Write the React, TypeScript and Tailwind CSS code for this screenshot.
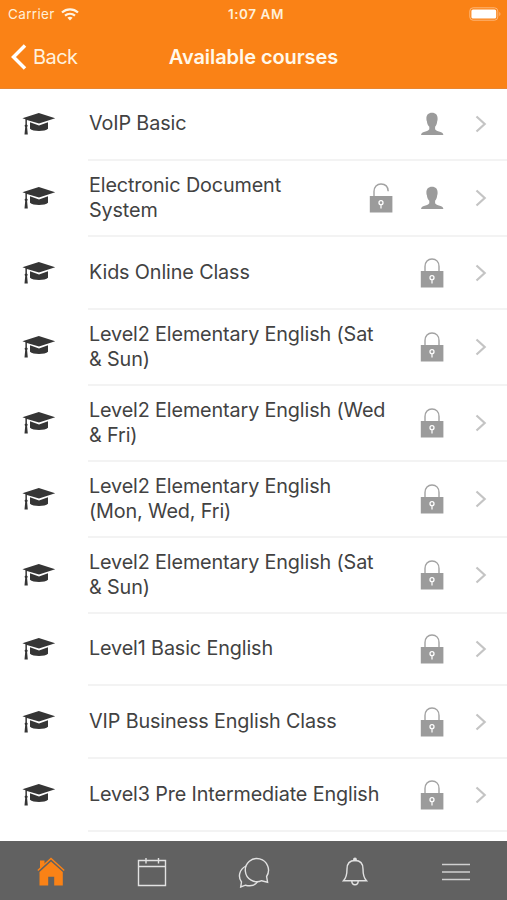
type Course = { lines: string[]; height: string; icons: ("open" | "lock" | "user")[] };

const courses: Course[] = [
  { lines: ["VoIP Basic"], height: "h-[72px]", icons: ["user"] },
  { lines: ["Electronic Document", "System"], height: "h-[76px]", icons: ["open", "user"] },
  { lines: ["Kids Online Class"], height: "h-[73px]", icons: ["lock"] },
  { lines: ["Level2 Elementary English (Sat", "& Sun)"], height: "h-[76px]", icons: ["lock"] },
  { lines: ["Level2 Elementary English (Wed", "& Fri)"], height: "h-[76px]", icons: ["lock"] },
  { lines: ["Level2 Elementary English", "(Mon, Wed, Fri)"], height: "h-[76px]", icons: ["lock"] },
  { lines: ["Level2 Elementary English (Sat", "& Sun)"], height: "h-[76px]", icons: ["lock"] },
  { lines: ["Level1 Basic English"], height: "h-[72px]", icons: ["lock"] },
  { lines: ["VIP Business English Class"], height: "h-[73px]", icons: ["lock"] },
  { lines: ["Level3 Pre Intermediate English"], height: "h-[73px]", icons: ["lock"] },
];

function Cap() {
  return (
    <svg width="34" height="24" viewBox="0 0 34 24" className="shrink-0 fill-[#353535]">
      <path d="M16.800 1 33.200 6.200 17 11.400 4.900 8V12.500l.9 1.300-.7 1.300.7 7.500H2.500l.7-7.500-.7-1.300.9-1.300V7.300L.4 6.200Z" />
      <path d="M8 10.200 17 13.600l9-3.400v6.600c-2.800 3-15.200 3-18 0Z" />
    </svg>
  );
}

function Lock({ open = false }: { open?: boolean }) {
  return (
    <svg width="24" height="30" viewBox="0 0 24 30" className="shrink-0">
      <path
        d={open ? "M5 13.500V8.500C5 3.900 8 1 12 1s7 2.500 7.200 7.200" : "M5 13.500V8.500C5 3.900 8 1 12 1s7 2.900 7 7.500v5"}
        fill="none"
        stroke="#a2a2a2"
        strokeWidth="1.400"
      />
      <rect x=".8" y="13" width="22.600" height="16.500" fill="#9b9b9b" />
      <circle cx="12" cy="19.700" r="2" fill="#9b9b9b" stroke="#fff" strokeWidth="1.300" />
      <path d="M12 21.500v3.900" stroke="#f4f4f4" strokeWidth="1.400" />
    </svg>
  );
}

function Person() {
  return (
    <svg width="24" height="24" viewBox="0 0 24 24" className="shrink-0 fill-[#9b9b9b]">
      <path d="M12 .8c3.700 0 5.700 2.300 5.600 6 0 1.100-.1 1.800-.4 2.400-.2 2.500-1 4.200-2.100 5.600v2.500c.9 1.600 3.300 1.900 5.400 2.600 1.800.6 2.600 1.300 2.900 3.200H1c.3-1.900 1.100-2.600 2.900-3.200 2.100-.7 4.500-1 5.400-2.600v-2.500C8 13.400 7.100 11.700 6.900 9.200c-.4-.6-.5-1.300-.5-2.400C6.300 3.100 8.300.8 12 .8Z" />
    </svg>
  );
}

function Row({ course }: { course: Course }) {
  return (
    <li className={`flex shrink-0 ${course.height}`}>
      <div className="flex w-[88px] items-center pl-[22px] pb-[2px]">
        <Cap />
      </div>
      <div className="flex flex-1 items-center border-b-2 border-[#f3f3f3] pl-px">
        <div className="flex-1 whitespace-nowrap pb-px text-[19.800px] leading-[24.400px] tracking-[-0.130px] text-[#424242]">
          {course.lines.map((line) => (
            <div key={line}>{line}</div>
          ))}
        </div>
        <div className="flex items-center gap-[27px] pr-[31px]">
          {course.icons.map((icon) =>
            icon === "user" ? <Person key={icon} /> : <Lock key={icon} open={icon === "open"} />,
          )}
        </div>
        <svg width="12" height="18" viewBox="0 0 12 18" className="mr-[20px] shrink-0">
          <path d="m1.500 1.500 8.200 7.500-8.200 7.500" fill="none" stroke="#c4c4c4" strokeWidth="2.200" />
        </svg>
      </div>
    </li>
  );
}

const tab = "flex flex-1 justify-center";

export default function App() {
  return (
    <div className="flex h-[900px] w-[507px] flex-col overflow-hidden bg-white font-['Inter','Liberation_Sans',sans-serif]">
      <header className="h-[89px] shrink-0 border-b border-[#e88631] bg-[#fa8216] text-white">
        <div className="grid h-[28px] grid-cols-3 items-center pl-[8px] pr-[6px] text-[13.500px] text-[#fff0d9]">
          <div className="flex items-center gap-[6px]">
            <span className="tracking-[0.350px]">Carrier</span>
            <svg width="18" height="13" viewBox="0 0 18 13" fill="none" stroke="#fff4e3" strokeWidth="2.200">
              <path d="M1 4.500c4.600-4.200 11.400-4.200 16 0M4 7.700c2.900-2.500 7.100-2.500 10 0" />
              <path d="m9 12.500-2.600-2.700c1.600-1.300 3.600-1.300 5.200 0Z" fill="#fff4e3" stroke="none" />
            </svg>
          </div>
          <span className="pl-[3px] text-center font-semibold tracking-[0.550px]">1:07 AM</span>
          <svg width="32" height="14" viewBox="0 0 32 14" className="justify-self-end">
            <rect x=".8" y=".8" width="28" height="12.400" rx="3.300" fill="none" stroke="#fdb77a" />
            <rect x="2.400" y="2.400" width="24.800" height="9.200" rx="1.600" fill="white" />
            <path d="M30.300 5c1.500.5 1.500 3.500 0 4Z" fill="#fdb77a" />
          </svg>
        </div>
        <div className="grid h-[58px] grid-cols-[110px_1fr_110px] items-center">
          <div className="flex items-center gap-[6px] pl-[11px] text-[20px] tracking-[-0.550px] text-[#fff1de]">
            <svg width="16" height="26" viewBox="0 0 16 26">
              <path d="M14 1.500 2.500 13 14 24.500" fill="none" stroke="white" strokeWidth="3.500" />
            </svg>
            <span>Back</span>
          </div>
          <h1 className="whitespace-nowrap text-center text-[20px] font-semibold tracking-[-0.070px] text-[#fff8ea]">Available courses</h1>
        </div>
      </header>
      <main className="flex-1 overflow-hidden">
        <ul className="flex flex-col">
          {courses.map((course, i) => (
            <Row key={i} course={course} />
          ))}
        </ul>
      </main>
      <nav className="flex h-[59px] shrink-0 items-center bg-[#616161] pt-[3px]">
        <div className={tab}>
          <svg width="28" height="30" viewBox="0 0 28 30" fill="#fa8216">
            <path d="M3 3.500h4.500v4L3 11.500Z" />
            <path d="m.8 13.500 13.200-12 13.200 12" fill="none" stroke="#fa8216" strokeWidth="1.500" />
            <path d="m14 4.500 11.800 10.500V28.500H17.200v-8.800h-6v8.800H2.500V15Z" />
          </svg>
        </div>
        <div className={tab}>
          <svg width="30" height="30" viewBox="0 0 30 30" fill="none" stroke="#e2e2e2" strokeWidth="1.400">
            <path d="M1.500 3.500h27v25h-27ZM1.500 9.500h27M9 1v5.500M21.500 1v5.500" />
          </svg>
        </div>
        <div className={tab}>
          <svg width="32" height="32" viewBox="0 0 32 32" fill="none" stroke="#e2e2e2" strokeWidth="1.400">
            <path d="M29.600 26.300l-1-5.800A11.600 11.600 0 1 0 23.700 24.700Z" />
            <path d="M8 10C1.200 13.500-.3 20.800 3.500 26L2.700 31l4.800-1.800c5 1.200 9.500.5 12-3.600" />
          </svg>
        </div>
        <div className={tab}>
          <svg width="26" height="30" viewBox="0 0 26 30" fill="none" stroke="#e2e2e2" strokeWidth="1.400">
            <circle cx="13" cy="2.400" r="1.200" fill="#e2e2e2" />
            <path d="M13 3.500c-5.500 0-8 3.300-8 8.500 0 6-.8 9-3.500 11.700h23C21.800 21 21 18 21 12c0-5.200-2.500-8.500-8-8.500ZM9.800 24c0 5 6.400 5 6.400 0" />
          </svg>
        </div>
        <div className={tab}>
          <svg width="28" height="20" viewBox="0 0 28 20" fill="none" stroke="#d0d0d0" strokeWidth="1.700">
            <path d="M0 2.500h28M0 10h28M0 17.500h28" />
          </svg>
        </div>
      </nav>
    </div>
  );
}
